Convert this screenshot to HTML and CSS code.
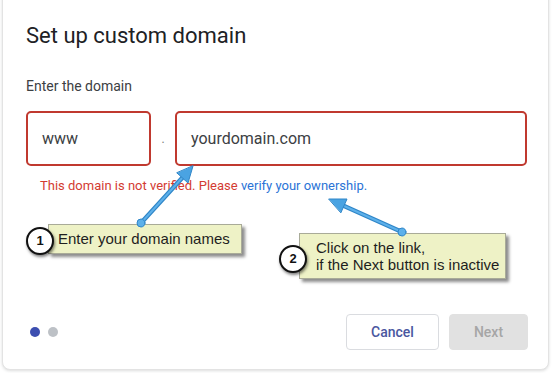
FILE: index.html
```html
<!DOCTYPE html>
<html>
<head>
<meta charset="utf-8">
<link rel="stylesheet" href="styles.css">
</head>
<body>
<div class="page">
  <div class="card">
    <h1 class="title">Set up custom domain</h1>
    <div class="label">Enter the domain</div>
    <div class="inputs">
      <div class="field field-sub">www</div>
      <div class="sep">.</div>
      <div class="field field-main">yourdomain.com</div>
    </div>
    <div class="error">This domain is not verified. Please <span class="link">verify your ownership.</span></div>
    <div class="footer">
      <div class="steps"><span class="step active"></span><span class="step"></span></div>
      <div class="actions">
        <button class="btn btn-cancel">Cancel</button>
        <button class="btn btn-next">Next</button>
      </div>
    </div>
  </div>

  <div class="callout callout-1">
    <span class="badge">1</span>
    <span class="callout-text">Enter your domain names</span>
  </div>
  <div class="callout callout-2">
    <span class="badge">2</span>
    <span class="callout-text">Click on the link,<br>if the Next button is inactive</span>
  </div>

  <svg class="arrows" width="552" height="373" viewBox="0 0 552 373">
    <g stroke="#2f86c8" stroke-linejoin="round" stroke-linecap="round">
      <line x1="141" y1="223" x2="183" y2="177" stroke-width="4.5"/>
      <line x1="141" y1="223" x2="183" y2="177" stroke="#5db0ea" stroke-width="2"/>
      <polygon points="193,166 188,183 177,173" fill="#4aa3e2" stroke-width="1"/>
      <circle cx="141" cy="223" r="4" fill="#5db0ea" stroke-width="1"/>
      <line x1="402" y1="232" x2="343" y2="205.5" stroke-width="4.5"/>
      <line x1="402" y1="232" x2="343" y2="205.5" stroke="#5db0ea" stroke-width="2"/>
      <polygon points="329,199 347,199 341,212.5" fill="#4aa3e2" stroke-width="1"/>
      <circle cx="402" cy="232" r="4" fill="#5db0ea" stroke-width="1"/>
    </g>
  </svg>
</div>
</body>
</html>
```

FILE: styles.css
```css
* { box-sizing: border-box; }
html, body { margin: 0; padding: 0; background: #ffffff; }
.page {
  position: relative;
  width: 552px;
  height: 373px;
  overflow: hidden;
  font-family: Roboto, "Noto Sans", Arial, sans-serif;
}
.card {
  margin: -10px 3px 0 2px;
  height: 380px;
  border: 1px solid #e3e3e3;
  border-radius: 8px;
  background: #ffffff;
  box-shadow: 0 1px 3px rgba(60, 64, 67, 0.18);
  padding: 31px 20px 19px 23px;
  display: flex;
  flex-direction: column;
}
.title {
  margin: 0;
  font-size: 22px;
  line-height: 28px;
  font-weight: 400;
  color: #202124;
}
.label {
  margin-top: 26px;
  font-size: 14px;
  line-height: 20px;
  color: #3c4043;
}
.inputs {
  margin-top: 15px;
  display: flex;
  align-items: stretch;
  height: 55px;
}
.field {
  border: 2px solid #c0392f;
  border-radius: 5px;
  padding-left: 14px;
  display: flex;
  align-items: center;
  font-size: 16px;
  color: #3c4043;
}
.field-sub { width: 125px; }
.field-main { width: 352px; }
.sep {
  width: 24px;
  display: flex;
  align-items: center;
  justify-content: center;
  font-size: 12px;
  color: #7a7a7a;
  padding-top: 1px;
}
.error {
  margin-top: 12px;
  padding-left: 14px;
  font-size: 13px;
  line-height: 16px;
  color: #d33b32;
}
.link { color: #2a73d6; }
.footer {
  margin-top: auto;
  display: flex;
  align-items: center;
  justify-content: space-between;
  padding-left: 4px;
}
.steps { display: flex; gap: 8px; }
.step {
  width: 10px;
  height: 10px;
  border-radius: 50%;
  background: #bdc1c6;
}
.step.active { background: #3c4eb0; }
.actions { display: flex; gap: 10px; }
.btn {
  height: 36px;
  border-radius: 4px;
  font-family: Roboto, Arial, sans-serif;
  font-size: 14px;
  font-weight: 500;
  padding: 0;
}
.btn-cancel {
  width: 93px;
  background: #ffffff;
  border: 1px solid #dadce0;
  color: #4a579f;
}
.btn-next {
  width: 79px;
  background: #e1e1e1;
  border: 1px solid #e1e1e1;
  color: #a6a6a6;
}
.callout {
  position: absolute;
  background: #eef2c6;
  border: 1px solid #a9ab98;
  box-shadow: 3px 3px 3px rgba(0, 0, 0, 0.45);
  font-family: "Liberation Sans", Arial, sans-serif;
  color: #1e1e1e;
}
.callout-1 {
  left: 48px;
  top: 224px;
  width: 194px;
  height: 30px;
  padding: 5px 0 0 9px;
  font-size: 15px;
  line-height: 18px;
}
.callout-2 {
  left: 299px;
  top: 233px;
  width: 207px;
  height: 46px;
  padding: 5px 0 0 16px;
  font-size: 15px;
  line-height: 17px;
}
.badge {
  position: absolute;
  width: 28px;
  height: 28px;
  border-radius: 50%;
  background: #ffffff;
  border: 2px solid #111111;
  box-shadow: 1px 2px 3px rgba(0, 0, 0, 0.5);
  font-weight: 700;
  font-size: 13px;
  line-height: 24px;
  text-align: center;
  color: #111111;
}
.callout-1 .badge { left: -23px; top: 2px; }
.callout-2 .badge { left: -21px; top: 11px; }
.arrows {
  position: absolute;
  left: 0;
  top: 0;
  pointer-events: none;
}
```
